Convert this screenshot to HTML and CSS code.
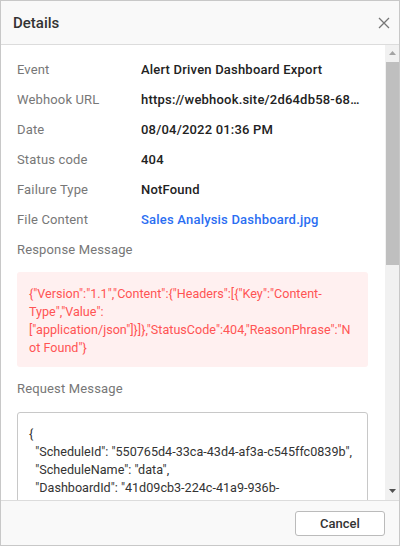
FILE: index.html
```html
<!DOCTYPE html>
<html>
    <head>
        <title>Details</title>
        <link rel="stylesheet" href="styles.css">
    </head>
    <body>
        <div class="dialog">
            <div class="dialog-header">
                <span class="dialog-title">Details</span>
                <button class="close-button" type="button" title="Close">
                    <svg width="12" height="12" viewBox="0 0 12 12">
                        <path d="M1 1L11 11M11 1L1 11" stroke="#777" stroke-width="1.3" fill="none"/>
                    </svg>
                </button>
            </div>
            <div class="dialog-body">
                <div class="dialog-content">
                    <div class="detail-row">
                        <span class="detail-label">Event</span>
                        <span class="detail-value">Alert Driven Dashboard Export</span>
                    </div>
                    <div class="detail-row">
                        <span class="detail-label">Webhook URL</span>
                        <span class="detail-value">https://webhook.site/2d64db58-6812-4f2e-9c1b-7a3e5d0c4b21</span>
                    </div>
                    <div class="detail-row">
                        <span class="detail-label">Date</span>
                        <span class="detail-value">08/04/2022 01:36 PM</span>
                    </div>
                    <div class="detail-row">
                        <span class="detail-label">Status code</span>
                        <span class="detail-value">404</span>
                    </div>
                    <div class="detail-row">
                        <span class="detail-label">Failure Type</span>
                        <span class="detail-value">NotFound</span>
                    </div>
                    <div class="detail-row">
                        <span class="detail-label">File Content</span>
                        <a class="detail-value detail-link" href="#">Sales Analysis Dashboard.jpg</a>
                    </div>

                    <div class="section-label">Response Message</div>
                    <div class="message-box response-box">{"Version":"1.1","Content":{"Headers":[{"Key":"Content-Type","Value":["application/json"]}]},"StatusCode":404,"ReasonPhrase":"Not Found"}</div>

                    <div class="section-label">Request Message</div>
                    <div class="message-box request-box">{
  "ScheduleId": "550765d4-33ca-43d4-af3a-c545ffc0839b",
  "ScheduleName": "data",
  "DashboardId": "41d09cb3-224c-41a9-936b-5e2f4a0c7d19",
  "DashboardName": "Sales Analysis Dashboard",
  "ExportType": "Image",
  "Status": "Failed"
}</div>
                </div>
                <div class="scrollbar">
                    <div class="scroll-button scroll-up">
                        <svg width="7" height="4" viewBox="0 0 7 4"><path d="M3.5 0L7 4H0Z" fill="#a3a3a3"/></svg>
                    </div>
                    <div class="scroll-track">
                        <div class="scroll-thumb"></div>
                    </div>
                    <div class="scroll-button scroll-down">
                        <svg width="7" height="4" viewBox="0 0 7 4"><path d="M0 0H7L3.5 4Z" fill="#505050"/></svg>
                    </div>
                </div>
            </div>
            <div class="dialog-footer">
                <button class="cancel-button" type="button">Cancel</button>
            </div>
        </div>
    </body>
</html>
```
FILE: styles.css
```css
html, body {
    margin: 0;
    padding: 0;
}

body {
    font-family: Roboto, 'Liberation Sans', sans-serif;
    font-size: 13px;
    color: #333;
}

.dialog {
    width: 400px;
    height: 546px;
    box-sizing: border-box;
    border: 1px solid #c8c8c8;
    display: flex;
    flex-direction: column;
    background: #fff;
}

.dialog-header {
    height: 43px;
    flex: none;
    display: flex;
    align-items: center;
    justify-content: space-between;
    padding: 0 9px 0 12px;
    background: #f9f9f9;
    border-bottom: 1px solid #dcdcdc;
}
.dialog-title {
    font-size: 15px;
    font-weight: 500;
    color: #333;
}
.close-button {
    border: none;
    background: none;
    padding: 0;
    width: 12px;
    height: 12px;
    display: flex;
    cursor: pointer;
}

.dialog-body {
    flex: 1;
    min-height: 0;
    display: flex;
}

.dialog-content {
    flex: 1;
    min-width: 0;
    overflow: hidden;
    padding: 9px 17px 0 16px;
}

/* scrollbar drawn by hand */
.scrollbar {
    width: 14px;
    flex: none;
    display: flex;
    flex-direction: column;
    background: #f1f1f1;
}
.scroll-button {
    height: 15px;
    flex: none;
    display: flex;
    justify-content: center;
    padding-left: 1px;
}
.scroll-up {
    align-items: flex-start;
    padding-top: 6px;
    box-sizing: border-box;
}
.scroll-down {
    align-items: flex-start;
    padding-top: 4px;
    box-sizing: border-box;
}
.scroll-button svg {
    display: block;
}
.scroll-track {
    flex: 1;
    padding-top: 2px;
}
.scroll-thumb {
    height: 203px;
    margin: 0 0 0 1px;
    background: #bfbfbf;
}

.detail-row {
    display: flex;
    height: 30px;
    align-items: center;
}
.detail-label {
    width: 124px;
    flex: none;
    color: #777;
    letter-spacing: 0.15px;
}
.detail-value {
    flex: 1;
    min-width: 0;
    padding-right: 6px;
    color: #222;
    font-weight: 500;
    letter-spacing: 0.2px;
    white-space: nowrap;
    overflow: hidden;
    text-overflow: ellipsis;
}
.detail-link {
    color: #2b6ef2;
    text-decoration: none;
}

.section-label {
    height: 30px;
    line-height: 30px;
    color: #777;
    letter-spacing: 0.15px;
    margin-top: 1px;
}

.message-box {
    margin: 7px 0 7px 0;
    padding: 13px 13px 10px 12px;
    font-size: 12.6px;
    line-height: 18px;
    border-radius: 3px;
    white-space: pre-wrap;
    overflow-wrap: anywhere;
}
.response-box {
    background: #fff0f0;
    color: #ff5454;
}
.request-box {
    border: 1px solid #c8c8c8;
    color: #333;
    padding: 12px 9px 10px 11px;
    margin-top: 8px;
}

.dialog-footer {
    height: 44px;
    flex: none;
    display: flex;
    align-items: center;
    justify-content: flex-end;
    padding: 0 14px;
    background: #f9f9f9;
    border-top: 1px solid #dcdcdc;
}
.cancel-button {
    width: 90px;
    height: 25px;
    background: #fff;
    border: 1px solid #bbb;
    border-radius: 3px;
    font-family: Roboto, 'Liberation Sans', sans-serif;
    font-size: 13px;
    font-weight: 500;
    color: #333;
    cursor: pointer;
}
```
